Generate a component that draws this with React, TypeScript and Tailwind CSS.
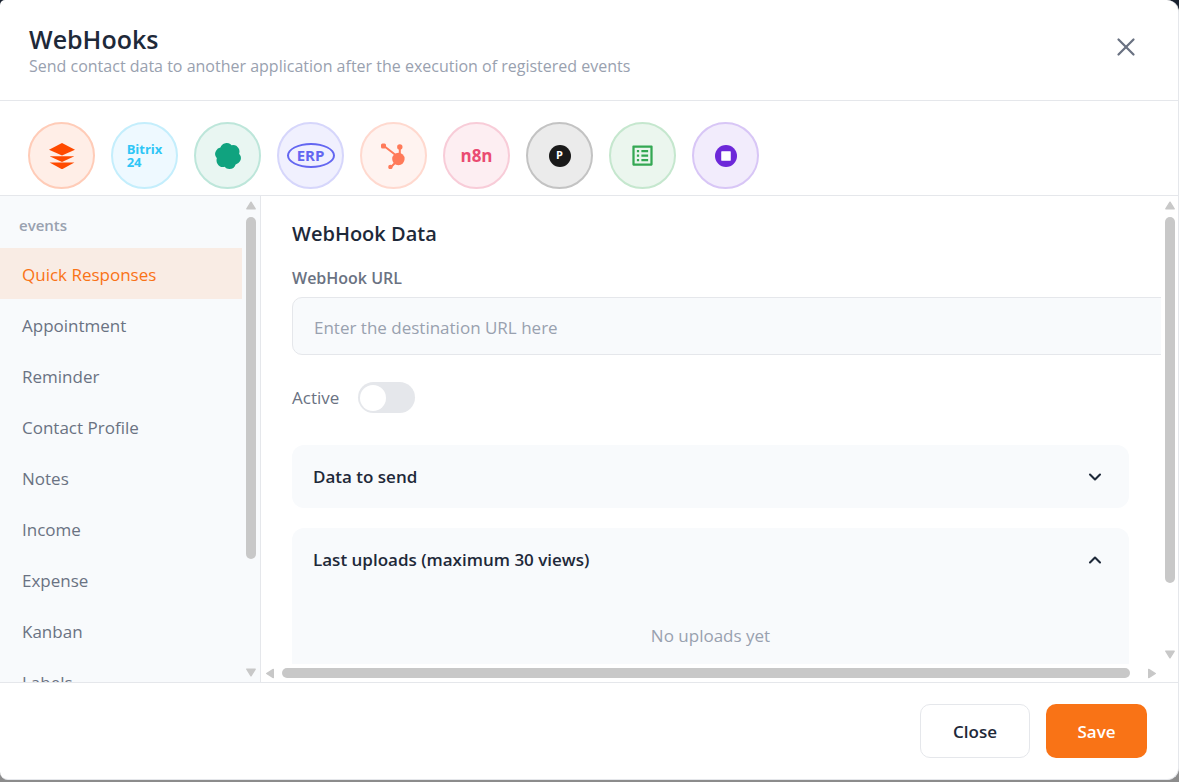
import React, { useState } from 'react';
import { ChevronDown, ChevronUp, X } from 'lucide-react';
import { MdListAlt } from 'react-icons/md';

const events = [
  'Quick Responses',
  'Appointment',
  'Reminder',
  'Contact Profile',
  'Notes',
  'Income',
  'Expense',
  'Kanban',
  'Labels',
];

const BufferIcon = () => (
  <svg viewBox="0 0 26 26" className="size-[26px]" fill="#ff4a00" aria-hidden="true">
    <path d="M13 0 26 6.8 13 12.6 0 6.8z" />
    <path d="M0.6 13.2h24.8L13 19z" />
    <path d="M0.6 19.6h24.8L13 26.3z" />
  </svg>
);

const OpenAiIcon = () => (
  <svg viewBox="0 0 24 24" className="size-[26px]" fill="#10a37f" aria-hidden="true">
    <path d="M22.2819 9.8211a5.9847 5.9847 0 0 0-.5157-4.9108 6.0462 6.0462 0 0 0-6.5098-2.9A6.0651 6.0651 0 0 0 4.9807 4.1818a5.9847 5.9847 0 0 0-3.9977 2.9 6.0462 6.0462 0 0 0 .7427 7.0966 5.98 5.98 0 0 0 .511 4.9107 6.051 6.051 0 0 0 6.5146 2.9001A5.9847 5.9847 0 0 0 13.2599 24a6.0557 6.0557 0 0 0 5.7718-4.2058 5.9894 5.9894 0 0 0 3.9977-2.9001 6.0557 6.0557 0 0 0-.7475-7.0729z" />
  </svg>
);

const HubspotIcon = () => (
  <svg viewBox="0 0 26 26" className="size-[26px]" fill="#ff7a59" stroke="#ff7a59" aria-hidden="true">
    <path d="M3 3l11 8.5M18.8 5v7M15 19l-5 5" strokeWidth="2" fill="none" />
    <rect x="0" y="0.5" width="5" height="5" rx="1.5" stroke="none" />
    <circle cx="18.8" cy="4" r="2.7" stroke="none" />
    <circle cx="17.4" cy="16" r="6.2" stroke="none" />
    <circle cx="9.4" cy="24" r="2.2" stroke="none" />
  </svg>
);

const integrations = [
  { name: 'Buffer', style: 'bg-[#ffeee7] border-[#ffccb8]', icon: <BufferIcon /> },
  {
    name: 'Bitrix24',
    style: 'bg-[#eef9ff] border-[#c4eefc]',
    icon: (
      <span className="text-left text-[13px] leading-[13px] font-bold text-[#2fc6f6]">
        Bitrix
        <br />
        24
      </span>
    ),
  },
  { name: 'OpenAI', style: 'bg-[#e9f6f2] border-[#bde6da]', icon: <OpenAiIcon /> },
  {
    name: 'ERP',
    style: 'bg-[#f0f0fe] border-[#d6d6fb]',
    icon: (
      <span className="flex h-[25px] w-12 items-center justify-center rounded-[50%] border-2 border-[#6366f1] text-[15px] font-bold text-[#6366f1]">
        ERP
      </span>
    ),
  },
  { name: 'HubSpot', style: 'bg-[#fff3f0] border-[#ffd9cf]', icon: <HubspotIcon /> },
  {
    name: 'n8n',
    style: 'bg-[#fdeef2] border-[#f8ccd8]',
    icon: <span className="text-[17px] font-bold text-[#ea4b71]">n8n</span>,
  },
  {
    name: 'Pipedrive',
    style: 'bg-[#ebebeb] border-[#c3c3c3]',
    icon: (
      <span className="flex size-[22px] items-center justify-center rounded-full bg-[#1a1a1a] text-[11px] font-bold text-white">
        P
      </span>
    ),
  },
  { name: 'Forms', style: 'bg-[#ebf6ee] border-[#c5e7ce]', icon: <MdListAlt size={27} color="#34a853" /> },
  {
    name: 'Checkout',
    style: 'bg-[#f2ecfc] border-[#d8c6f6]',
    icon: (
      <span className="flex size-[22px] items-center justify-center rounded-full bg-[#6d28d9]">
        <span className="size-[10px] rounded-[1px] border border-[#ddd0f7] bg-white" />
      </span>
    ),
  },
];

const Arrow = ({ className }: { className?: string }) => (
  <svg viewBox="0 0 10 9" className={`h-[9px] w-[10px] shrink-0 ${className ?? ''}`} aria-hidden="true">
    <path d="M5 1.2 9.2 7.8H0.8z" fill="#c8c8c8" stroke="#c8c8c8" strokeWidth="1.4" strokeLinejoin="round" />
  </svg>
);

const VerticalScrollbar = ({ thumb }: { thumb: string }) => (
  <div className="flex w-[17px] shrink-0 flex-col pt-[5px] pb-[5px] pl-1">
    <Arrow />
    <div className="my-[7px] min-h-0 flex-1">
      <div className={`w-[10px] rounded-full bg-[#c8c8c8] ${thumb}`} />
    </div>
    <Arrow className="rotate-180" />
  </div>
);

const HorizontalScrollbar = () => (
  <div className="flex h-[18px] shrink-0 items-center px-1">
    <Arrow className="-rotate-90" />
    <div className="mx-[7px] flex-1">
      <div className="h-[10px] w-[98.8%] rounded-full bg-[#c8c8c8]" />
    </div>
    <Arrow className="rotate-90" />
  </div>
);

export default function App() {
  const [selectedEvent, setSelectedEvent] = useState('Quick Responses');
  const [active, setActive] = useState(false);
  const [dataOpen, setDataOpen] = useState(false);
  const [uploadsOpen, setUploadsOpen] = useState(true);
  const [url, setUrl] = useState('');

  return (
    <div className="h-screen bg-linear-to-b from-[#1a2230] from-50% to-[#8c8c8c] to-50% pb-[2px] font-['Segoe_UI','Open_Sans',sans-serif] text-[17px]">
      <div
        role="dialog"
        aria-labelledby="webhooks-title"
        className="flex h-full flex-col overflow-hidden rounded-tl-[5px] rounded-tr-xl rounded-br-xl rounded-bl-lg border-r border-b border-gray-200 bg-white"
      >
        <header className="flex h-[101px] shrink-0 items-start justify-between border-b border-gray-200 pt-[23px] pr-[37px] pl-[29px]">
          <div>
            <h1 id="webhooks-title" className="text-[25px] leading-8 font-semibold text-gray-800">
              WebHooks
            </h1>
            <p className="text-[16px] leading-[22px] text-gray-400">
              Send contact data to another application after the execution of registered events
            </p>
          </div>
          <button type="button" aria-label="Close dialog" className="mt-[9px] text-gray-500">
            <X size={30} strokeWidth={1.8} />
          </button>
        </header>

        <div className="flex h-[95px] shrink-0 items-end gap-4 border-b border-gray-200 pb-[6px] pl-7">
          {integrations.map((item) => (
            <button
              key={item.name}
              type="button"
              aria-label={item.name}
              className={`flex size-[67px] shrink-0 items-center justify-center rounded-full border-2 ${item.style}`}
            >
              {item.icon}
            </button>
          ))}
        </div>

        <div className="flex min-h-0 flex-1">
          <aside className="flex w-[261px] shrink-0 border-r border-gray-200 bg-[#f8fafc] pr-px">
            <nav className="min-w-0 flex-1 overflow-y-auto [scrollbar-width:none]">
              <h2 className="px-[19px] pt-[19px] pb-[13px] text-[15px] leading-5 font-semibold text-gray-400">events</h2>
              {events.map((event) => (
                <button
                  key={event}
                  type="button"
                  onClick={() => setSelectedEvent(event)}
                  className={`flex h-[51px] w-full items-center px-[22px] pt-[3px] text-left ${
                    event === selectedEvent ? 'bg-[#f9ece4] text-[#f97316]' : 'text-gray-500'
                  }`}
                >
                  {event}
                </button>
              ))}
            </nav>
            <VerticalScrollbar thumb="h-[77%]" />
          </aside>

          <main className="flex min-w-0 flex-1 flex-col">
            <div className="flex min-h-0 flex-1">
              <div className="min-w-0 flex-1 overflow-auto pt-6 pr-8 pl-[31px] [scrollbar-width:none]">
                <h2 className="text-[20px] leading-7 font-semibold text-gray-800">WebHook Data</h2>
                <label htmlFor="webhook-url" className="mt-[17px] block text-[16px] leading-[26px] font-semibold text-gray-500">
                  WebHook URL
                </label>
                <input
                  id="webhook-url"
                  type="url"
                  value={url}
                  onChange={(e) => setUrl(e.target.value)}
                  placeholder="Enter the destination URL here"
                  className="mt-[6px] block h-[58px] w-[calc(100%+48px)] rounded-[10px] border border-gray-200 bg-[#f8fafc] px-[21px] pt-[2px] text-gray-800 placeholder:text-gray-400"
                />

                <label className="mt-[27px] flex w-fit items-center gap-4 leading-6 text-gray-500">
                  <span className="w-[50px]">Active</span>
                  <input
                    type="checkbox"
                    role="switch"
                    checked={active}
                    onChange={(e) => setActive(e.target.checked)}
                    className="flex h-[31px] w-[57px] appearance-none items-center rounded-full bg-gray-200 px-[2px] before:size-[26px] before:rounded-full before:bg-white checked:justify-end checked:bg-[#f97316]"
                  />
                </label>

                <section className="mt-8 rounded-xl bg-[#f8fafc]">
                  <button
                    type="button"
                    aria-expanded={dataOpen}
                    onClick={() => setDataOpen(!dataOpen)}
                    className="flex h-[63px] w-full items-center justify-between pt-px pr-6 pl-[21px] font-semibold text-gray-800"
                  >
                    Data to send
                    {dataOpen ? <ChevronUp size={20} strokeWidth={2.5} /> : <ChevronDown size={20} strokeWidth={2.5} />}
                  </button>
                </section>

                <section className="mt-5 rounded-xl bg-[#f8fafc]">
                  <button
                    type="button"
                    aria-expanded={uploadsOpen}
                    onClick={() => setUploadsOpen(!uploadsOpen)}
                    className="flex h-[63px] w-full items-center justify-between pt-px pr-6 pl-[21px] font-semibold text-gray-800"
                  >
                    Last uploads (maximum 30 views)
                    {uploadsOpen ? <ChevronUp size={20} strokeWidth={2.5} /> : <ChevronDown size={20} strokeWidth={2.5} />}
                  </button>
                  {uploadsOpen && (
                    <p className="pt-8 pb-12 text-center leading-[26px] text-gray-400">No uploads yet</p>
                  )}
                </section>
              </div>
              <VerticalScrollbar thumb="h-[86%]" />
            </div>
            <div className="pr-[17px]">
              <HorizontalScrollbar />
            </div>
          </main>
        </div>

        <footer className="flex shrink-0 justify-end gap-4 border-t border-gray-200 pt-[21px] pr-[31px] pb-[21px]">
          <button
            type="button"
            className="h-[54px] w-[110px] rounded-[10px] border border-gray-200 bg-white pt-[2px] font-semibold text-gray-800"
          >
            Close
          </button>
          <button type="button" className="h-[54px] w-[101px] rounded-[10px] bg-[#f97316] pt-[2px] font-semibold text-white">
            Save
          </button>
        </footer>
      </div>
    </div>
  );
}
